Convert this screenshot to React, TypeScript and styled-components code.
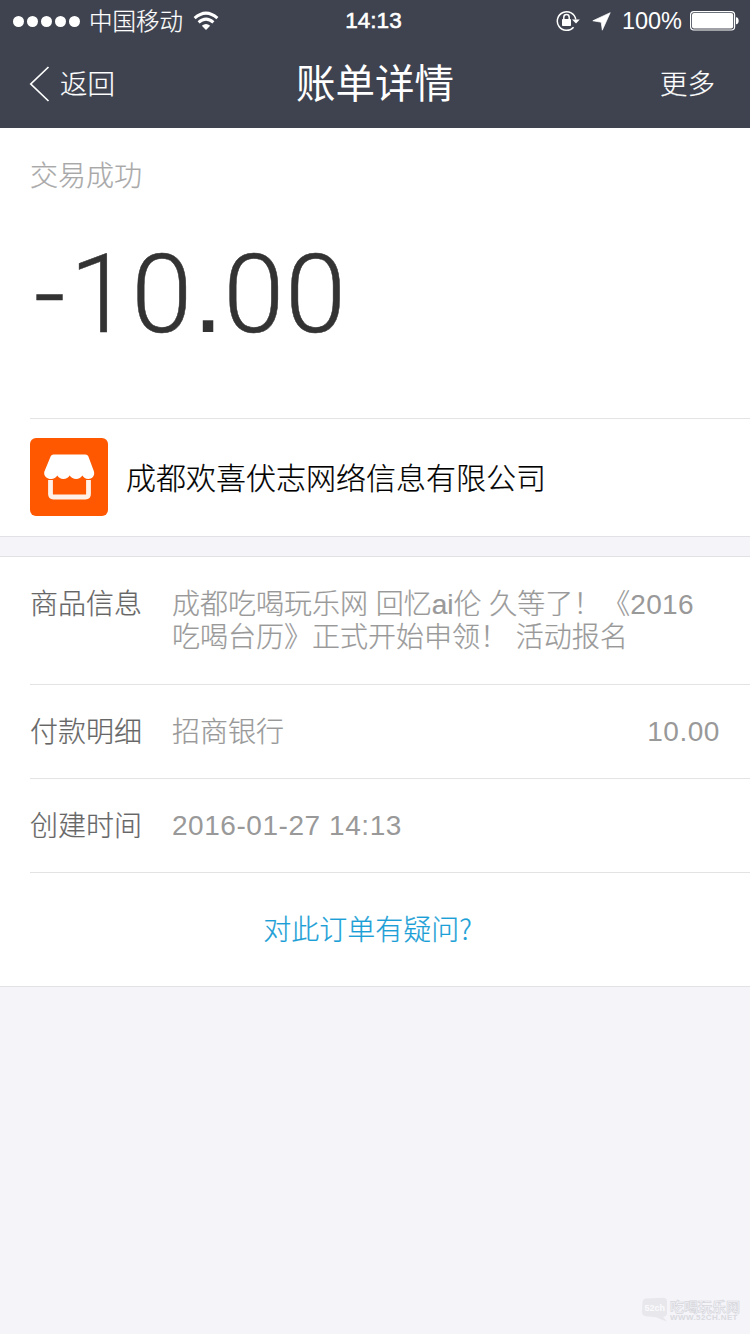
import React from 'react';
import styled, { createGlobalStyle } from 'styled-components';

const GlobalStyle = createGlobalStyle`
  * { box-sizing: border-box; }
  body {
    margin: 0;
    background: #f4f4f9;
    font-family: "Liberation Sans", "Noto Sans CJK SC", sans-serif;
    font-weight: 300;
  }
`;

const Screen = styled.div`
  position: relative;
  width: 750px;
  height: 1334px;
  overflow: hidden;
  background: #f4f4f9;
`;

const Header = styled.header`
  height: 128px;
  background: #3e434f;
  color: #fff;
`;

const StatusBar = styled.div`
  display: grid;
  grid-template-columns: 1fr auto 1fr;
  height: 40px;
  padding: 0 11px 0 13px;
  font-size: 23.5px;
  line-height: 40px;
`;

const StatusGroup = styled.div<{ $end?: boolean }>`
  display: flex;
  align-items: center;
  justify-content: ${(p) => (p.$end ? 'flex-end' : 'flex-start')};
`;

const Signal = styled.div`
  display: flex;
  gap: 3px;
  margin-right: 9px;
`;

const SignalDot = styled.i`
  width: 11px;
  height: 11px;
  border-radius: 50%;
  background: #fff;
`;

const Carrier = styled.span`
  margin-right: 10px;
  padding-top: 2px;
  -webkit-text-stroke: 0.2px currentColor;
`;

const Clock = styled.span`
  margin-right: 5px;
  font-size: 22.5px;
  padding-top: 1px;
  -webkit-text-stroke: 0.6px #fff;
`;

const Percent = styled.span`
  margin: 0 8px 0 11px;
`;

const NavBar = styled.nav`
  display: grid;
  grid-template-columns: 1fr auto 1fr;
  height: 88px;
  padding: 0 35px 0 29px;
  line-height: 86px;
`;

const NavAction = styled.span<{ $end?: boolean }>`
  display: flex;
  align-items: center;
  gap: 10px;
  height: 87px;
  justify-content: ${(p) => (p.$end ? 'flex-end' : 'flex-start')};
  font-size: 27.5px;
  -webkit-text-stroke: 0.2px currentColor;
`;

const NavText = styled.span`
  padding-top: 3px;
`;

const Title = styled.h1`
  margin: 0 0 0 6px;
  font-size: 39.5px;
  line-height: 88px;
  font-weight: 400;
`;

const Card = styled.section`
  background: #fff;
  border-bottom: 1px solid #e1e1e6;
`;

const Details = styled(Card)`
  margin-top: 19px;
  border-top: 1px solid #e1e1e6;
`;

const Summary = styled.div`
  height: 290px;
  padding: 29px 30px 0;
`;

const Status = styled.div`
  font-size: 28px;
  line-height: 40px;
  color: #a8a8a8;
  -webkit-text-stroke: 0.2px currentColor;
`;

const Amount = styled.div`
  margin: 31px 0 0 4px;
  font-family: Roboto, "Liberation Sans", sans-serif;
  font-size: 110px;
  line-height: 132px;
  letter-spacing: 0.6px;
  color: #333;
  -webkit-text-stroke: 0.5px currentColor;
`;

const Point = styled.span`
  font-family: "Liberation Sans", sans-serif;
  letter-spacing: 0;
  -webkit-text-stroke: 0;
`;

const Minus = styled.span`
  letter-spacing: 4px;
`;

const Merchant = styled.div`
  display: flex;
  align-items: center;
  gap: 18px;
  height: 118px;
  margin-left: 30px;
  padding-bottom: 2px;
  border-top: 1px solid #e3e3e3;
  font-size: 30px;
  color: #000;
`;

const MerchantName = styled.span`
  margin-top: -1px;
  -webkit-text-stroke: 0.2px currentColor;
`;

const Row = styled.div<{ $height: number }>`
  display: flex;
  height: ${(p) => p.$height}px;
  margin-left: 30px;
  padding: 30px 30px 0 0;
  border-bottom: 1px solid #e3e3e3;
  font-size: 28px;
  line-height: 33px;
  color: #999;
`;

const Label = styled.span`
  width: 142px;
  padding-top: 1px;
  color: #666;
  -webkit-text-stroke: 0.2px currentColor;
`;

const Value = styled.span`
  flex: 1;
  padding-top: 1px;
  white-space: nowrap;
  -webkit-text-stroke: 0.2px currentColor;
`;

const Figures = styled.span`
  letter-spacing: 0.55px;
`;

const DateValue = styled(Figures)`
  flex: 1;
`;

const Quoted = styled.span`
  margin-left: -7px;
`;

const Plain = styled.span`
  letter-spacing: 0.4px;
  -webkit-text-stroke: 0;
`;

const Help = styled.a`
  display: block;
  height: 113px;
  padding-right: 15px;
  font-family: "Noto Sans CJK SC", sans-serif;
  font-size: 28px;
  line-height: 111px;
  text-align: center;
  color: #1c9fd6;
  -webkit-text-stroke: 0.2px currentColor;
`;

const Watermark = styled.div`
  position: absolute;
  right: 10px;
  bottom: 10px;
  display: flex;
  align-items: center;
  gap: 2px;
`;

const WatermarkName = styled.div`
  font-size: 14px;
  line-height: 14px;
  font-weight: 700;
  color: #f4f4f9;
  -webkit-text-stroke: 0.7px #d7d7dc;
  white-space: nowrap;
`;

const WatermarkSite = styled.div`
  font-size: 8px;
  line-height: 7px;
  letter-spacing: 0.4px;
  font-weight: 700;
  color: #dadadf;
`;

const WifiIcon = () => (
  <svg width="26" height="20" viewBox="0 0 26 20" fill="none" stroke="#fff" strokeWidth="3">
    <path d="M1.6 7.2Q13-3 24.4 7.2" />
    <path d="M5.6 11.4Q13 4.8 20.4 11.4" />
    <path d="M8.8 14.8Q13 11 17.2 14.8L13 19z" fill="#fff" stroke="none" />
  </svg>
);

const RotationLockIcon = () => (
  <svg width="24" height="22" viewBox="0 0 24 22" fill="none" stroke="#fff">
    <path d="M17.6 17.2A9.3 9.3 0 1 1 19.8 9.5" strokeWidth="1.5" />
    <path d="M16 9.5h7.8L20 13.6z" fill="#fff" stroke="none" />
    <rect x="6" y="9" width="9" height="7" rx="0.8" fill="#fff" stroke="none" />
    <path d="M7.8 9.5V7.2a2.7 2.7 0 0 1 5.4 0v2.3" strokeWidth="1.5" />
  </svg>
);

const LocationIcon = () => (
  <svg width="19" height="19" viewBox="0 0 19 19">
    <path d="M18.2.7 10.3 18.2 9.2 10.2.8 8.8z" fill="#fff" stroke="#fff" strokeWidth="0.7" strokeLinejoin="round" />
  </svg>
);

const IconGap = styled.i`
  width: 12px;
`;

const BatteryIcon = () => (
  <svg width="49" height="20" viewBox="0 0 49 20">
    <rect x="0.6" y="0.6" width="44" height="18.4" rx="3.2" fill="none" stroke="#fff" strokeWidth="1.2" />
    <rect x="2" y="2" width="41.2" height="15.6" rx="2" fill="#fff" />
    <path d="M46 6.3c3.6 0 3.6 7 0 7z" fill="#fff" />
  </svg>
);

const BackIcon = () => (
  <svg width="21" height="36" viewBox="0 0 21 36">
    <path d="M19.5 1 1.8 18l17.7 17" fill="none" stroke="#fff" strokeWidth="1.7" />
  </svg>
);

const ShopIcon = () => (
  <svg width="78" height="78" viewBox="0 0 78 78">
    <rect width="78" height="78" rx="6" fill="#ff5800" />
    <path
      d="M23.5 16.5h32q2 0 2.8 1.8l5.5 14.8c1.6 4.5-1.8 8-5.4 8-3 0-4.8-1.7-6.1-3.5-1.4 2-3.3 3.5-6.1 3.5s-5-1.5-6.5-3.5c-1.4 2-3.5 3.5-6.3 3.5s-4.7-1.5-6.1-3.5c-1.4 2-3.3 3.5-6.2 3.5-4 0-8-3.3-6.7-7.6l6.3-15.2q.8-1.8 2.8-1.8z"
      fill="#fff"
    />
    <path d="M20.5 42v14q0 3 3 3h32q3 0 3-3V42" fill="none" stroke="#fff1e8" strokeWidth="4.8" />
  </svg>
);

const WatermarkBubble = () => (
  <svg width="27" height="27" viewBox="0 0 27 27">
    <path d="M5 1.5 22 .8q4 0 4 4v12q-.5 3-4 3l4 5-11-4.5-10-1q-4-.5-4-4l.5-10q.5-3.8 3.5-3.8z" fill="#e8e8ec" />
    <text x="3.5" y="14" fontSize="9" fontWeight="700" fontFamily="Liberation Sans, sans-serif" fill="#fafafc">
      52ch
    </text>
  </svg>
);

export default function App() {
  return (
    <Screen>
      <GlobalStyle />
      <Header>
        <StatusBar>
          <StatusGroup>
            <Signal>
              {[0, 1, 2, 3, 4].map((n) => (
                <SignalDot key={n} />
              ))}
            </Signal>
            <Carrier>中国移动</Carrier>
            <WifiIcon />
          </StatusGroup>
          <Clock>14:13</Clock>
          <StatusGroup $end>
            <RotationLockIcon />
            <IconGap />
            <LocationIcon />
            <Percent>100%</Percent>
            <BatteryIcon />
          </StatusGroup>
        </StatusBar>
        <NavBar>
          <NavAction>
            <BackIcon />
            <NavText>返回</NavText>
          </NavAction>
          <Title>账单详情</Title>
          <NavAction $end>
            <NavText>更多</NavText>
          </NavAction>
        </NavBar>
      </Header>

      <Card>
        <Summary>
          <Status>交易成功</Status>
          <Amount>
            <Minus>-</Minus>10<Point>.</Point>00
          </Amount>
        </Summary>
        <Merchant>
          <ShopIcon />
          <MerchantName>成都欢喜伏志网络信息有限公司</MerchantName>
        </Merchant>
      </Card>

      <Details>
        <Row $height={128}>
          <Label>商品信息</Label>
          <Value>
            成都吃喝玩乐网 回忆ai伦 久等了！{' '}
            <Quoted>
              《<Plain>2016</Plain>
            </Quoted>
            <br />
            吃喝台历》正式开始申领！ 活动报名
          </Value>
        </Row>
        <Row $height={94}>
          <Label>付款明细</Label>
          <Value>招商银行</Value>
          <Figures>10.00</Figures>
        </Row>
        <Row $height={94}>
          <Label>创建时间</Label>
          <DateValue>2016-01-27 14:13</DateValue>
        </Row>
        <Help>对此订单有疑问?</Help>
      </Details>

      <Watermark>
        <WatermarkBubble />
        <div>
          <WatermarkName>吃喝玩乐网</WatermarkName>
          <WatermarkSite>WWW.52CH.NET</WatermarkSite>
        </div>
      </Watermark>
    </Screen>
  );
}
